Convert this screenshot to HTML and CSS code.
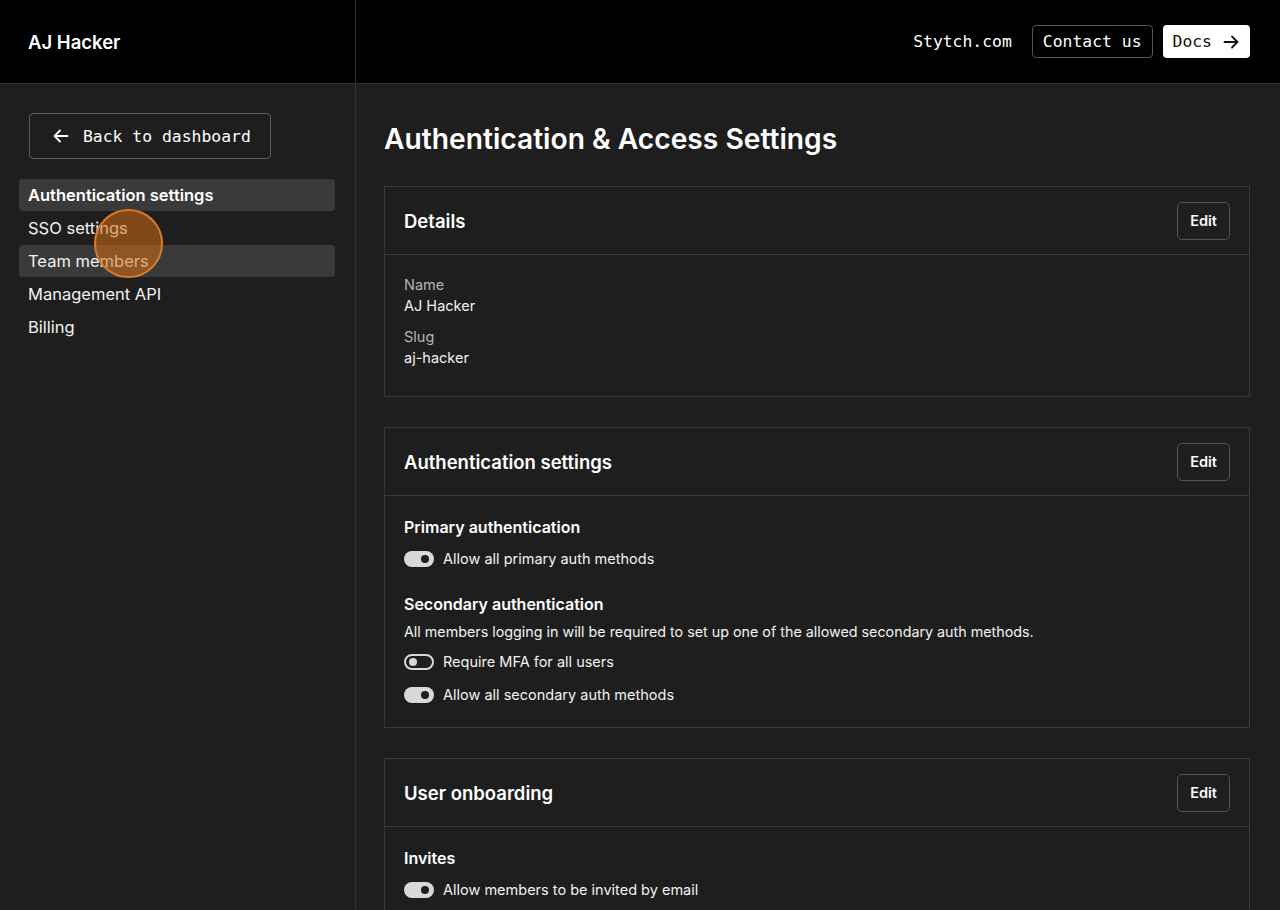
FILE: index.html
```html
<!DOCTYPE html>
<html lang="en">
<head>
<meta charset="utf-8">
<title>Authentication &amp; Access Settings</title>
<link rel="stylesheet" href="styles.css">
</head>
<body>
<header class="topbar">
  <div class="brand">AJ Hacker</div>
  <nav class="toplinks">
    <a class="toplink">Stytch.com</a>
    <a class="btn-outline">Contact us</a>
    <a class="btn-white">Docs
      <svg width="18" height="18" viewBox="0 0 18 18" fill="none" stroke="#111" stroke-width="1.8" stroke-linecap="round" stroke-linejoin="round"><path d="M2.5 9h13M10 3.5 15.5 9 10 14.5"/></svg>
    </a>
  </nav>
</header>
<div class="layout">
  <aside class="sidebar">
    <a class="back-btn">
      <svg width="18" height="18" viewBox="0 0 18 18" fill="none" stroke="#fff" stroke-width="1.8" stroke-linecap="round" stroke-linejoin="round"><path d="M15.5 9h-13M8 3.5 2.5 9 8 14.5"/></svg>
      Back to dashboard
    </a>
    <ul class="nav">
      <li class="nav-item active">Authentication settings</li>
      <li class="nav-item">SSO settings</li>
      <li class="nav-item hover">Team members</li>
      <li class="nav-item">Management API</li>
      <li class="nav-item">Billing</li>
    </ul>
    <div class="cursor"></div>
  </aside>
  <main class="main">
    <h1 class="title">Authentication &amp; Access Settings</h1>

    <section class="card">
      <div class="card-head">
        <h2>Details</h2>
        <button class="edit">Edit</button>
      </div>
      <div class="card-body details">
        <div class="field">
          <div class="label">Name</div>
          <div class="value">AJ Hacker</div>
        </div>
        <div class="field">
          <div class="label">Slug</div>
          <div class="value">aj-hacker</div>
        </div>
      </div>
    </section>

    <section class="card">
      <div class="card-head">
        <h2>Authentication settings</h2>
        <button class="edit">Edit</button>
      </div>
      <div class="card-body">
        <div class="group">
          <h3>Primary authentication</h3>
          <div class="toggle-row"><span class="toggle on"></span>Allow all primary auth methods</div>
        </div>
        <div class="group">
          <h3>Secondary authentication</h3>
          <p class="desc">All members logging in will be required to set up one of the allowed secondary auth methods.</p>
          <div class="toggle-row"><span class="toggle off"></span>Require MFA for all users</div>
          <div class="toggle-row"><span class="toggle on"></span>Allow all secondary auth methods</div>
        </div>
      </div>
    </section>

    <section class="card">
      <div class="card-head">
        <h2>User onboarding</h2>
        <button class="edit">Edit</button>
      </div>
      <div class="card-body">
        <div class="group">
          <h3>Invites</h3>
          <div class="toggle-row"><span class="toggle on"></span>Allow members to be invited by email</div>
        </div>
      </div>
    </section>
  </main>
</div>
</body>
</html>
```
FILE: styles.css
```css
* { box-sizing: border-box; }
html, body { margin: 0; height: 100%; overflow: hidden; }
body {
  background: #1e1e1e;
  color: #f2f2f2;
  font-family: Inter, "Noto Sans", sans-serif;
}
.topbar {
  height: 84px;
  background: #000;
  border-bottom: 1px solid #333;
  display: flex;
  align-items: stretch;
}
.brand {
  width: 356px;
  border-right: 1px solid #333;
  display: flex;
  align-items: center;
  padding-left: 28px;
  font-size: 18.5px;
  font-weight: 600;
  color: #fff;
}
.toplinks {
  flex: 1;
  display: flex;
  justify-content: flex-end;
  align-items: center;
  gap: 10px;
  padding-right: 30px;
  font-family: "DejaVu Sans Mono", "Liberation Mono", monospace;
  font-size: 16.4px;
}
.toplinks a { color: #fff; text-decoration: none; }
.toplink { margin-right: 10px; }
.btn-outline {
  height: 33px;
  display: flex;
  align-items: center;
  padding: 0 10px;
  border: 1px solid #555;
  border-radius: 4px;
}
.btn-white {
  height: 33px;
  display: flex;
  align-items: center;
  gap: 10px;
  padding: 0 10px;
  background: #fff;
  border-radius: 4px;
  color: #111 !important;
}
.layout {
  display: flex;
  height: calc(100% - 84px);
}
.sidebar {
  width: 356px;
  border-right: 1px solid #333;
  padding: 29px 20px 0 19px;
  position: relative;
}
.back-btn {
  margin-left: 10px;
  width: 242px;
  height: 46px;
  display: flex;
  align-items: center;
  gap: 13px;
  padding-left: 22px;
  border: 1px solid #5a5a5a;
  border-radius: 4px;
  font-family: "DejaVu Sans Mono", "Liberation Mono", monospace;
  font-size: 16.4px;
  color: #fff;
}
.nav {
  list-style: none;
  margin: 20px 0 0;
  padding: 0;
  display: flex;
  flex-direction: column;
  gap: 1px;
}
.nav-item {
  height: 32px;
  display: flex;
  align-items: center;
  padding-left: 9px;
  border-radius: 4px;
  font-size: 16.5px;
  color: #f2f2f2;
}
.nav-item.active { background: #3a3a3a; font-weight: 600; color: #fff; }
.nav-item.hover { background: #3a3a3a; }
.cursor {
  position: absolute;
  left: 94px;
  top: 125px;
  width: 69px;
  height: 69px;
  border-radius: 50%;
  background: rgba(214, 110, 20, 0.55);
  border: 2px solid #d9792a;
}
.main {
  flex: 1;
  padding: 0 30px 0 28px;
}
.title {
  margin: 38px 0 0;
  font-size: 28.2px;
  line-height: 35px;
  font-weight: 600;
  color: #fff;
}
.card {
  margin-top: 29px;
  border: 1px solid #3a3a3a;
}
.card + .card { margin-top: 30px; }
.card-head {
  height: 68px;
  display: flex;
  align-items: center;
  justify-content: space-between;
  padding: 0 19px;
  border-bottom: 1px solid #3a3a3a;
}
.card-head h2 {
  margin: 0;
  font-size: 18.5px;
  font-weight: 600;
  color: #fff;
}
.edit {
  width: 53px;
  height: 38px;
  background: transparent;
  border: 1px solid #555;
  border-radius: 5px;
  color: #fff;
  font-family: Inter, "Noto Sans", sans-serif;
  font-size: 14.5px;
  font-weight: 600;
}
.card-body {
  padding: 20px 19px 16px;
}
.details { padding: 19px 19px 28px; }
.field + .field { margin-top: 10px; }
.label { font-size: 14.5px; color: #b5b5b5; line-height: 21px; }
.value { font-size: 14.5px; color: #f2f2f2; line-height: 21px; }
.group + .group { margin-top: 18px; }
.group h3 {
  margin: 0 0 4px;
  font-size: 16px;
  line-height: 22px;
  font-weight: 600;
  color: #fff;
}
.group h3 + .desc { margin-top: 7px; }
.desc {
  margin: 0 0 3px;
  font-size: 14.3px;
  line-height: 20px;
  color: #f2f2f2;
}
.toggle-row {
  display: flex;
  align-items: center;
  gap: 9px;
  height: 33px;
  font-size: 14.5px;
  color: #f2f2f2;
}
.toggle {
  width: 30px;
  height: 16px;
  border-radius: 8px;
  position: relative;
  flex: none;
}
.toggle.on { background: #d8d8d8; }
.toggle.on::after {
  content: "";
  position: absolute;
  right: 5px; top: 4px;
  width: 8px; height: 8px;
  border-radius: 50%;
  background: #1e1e1e;
}
.toggle.off { border: 2px solid #d8d8d8; background: #1e1e1e; }
.toggle.off::after {
  content: "";
  position: absolute;
  left: 3px; top: 2px;
  width: 8px; height: 8px;
  border-radius: 50%;
  background: #d8d8d8;
}
```
